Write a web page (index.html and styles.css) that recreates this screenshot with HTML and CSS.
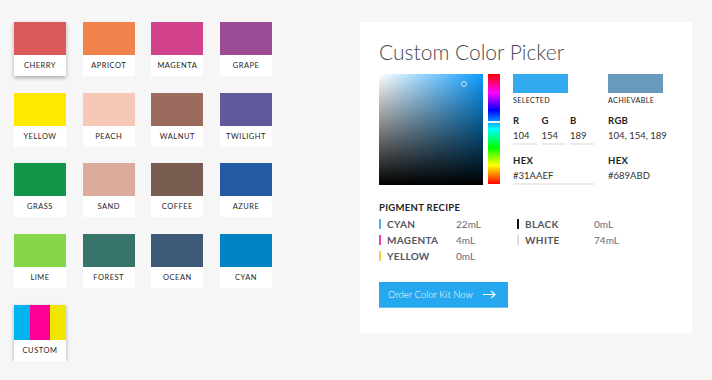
FILE: index.html
```html
<!DOCTYPE html>
<html>
<head>
  <meta charset="UTF-8">
  <title>Custom Color Picker</title>
  <link rel="stylesheet" href="styles.css">
</head>
<body>
  <div class="page">
    <div class="swatches">
      <div class="swatch is-active"><div class="chip cherry"></div><div class="name">Cherry</div></div>
      <div class="swatch"><div class="chip apricot"></div><div class="name">Apricot</div></div>
      <div class="swatch"><div class="chip magenta"></div><div class="name">Magenta</div></div>
      <div class="swatch"><div class="chip grape"></div><div class="name">Grape</div></div>

      <div class="swatch"><div class="chip yellow"></div><div class="name">Yellow</div></div>
      <div class="swatch"><div class="chip peach"></div><div class="name">Peach</div></div>
      <div class="swatch"><div class="chip walnut"></div><div class="name">Walnut</div></div>
      <div class="swatch"><div class="chip twilight"></div><div class="name">Twilight</div></div>

      <div class="swatch"><div class="chip grass"></div><div class="name">Grass</div></div>
      <div class="swatch"><div class="chip sand"></div><div class="name">Sand</div></div>
      <div class="swatch"><div class="chip coffee"></div><div class="name">Coffee</div></div>
      <div class="swatch"><div class="chip azure"></div><div class="name">Azure</div></div>

      <div class="swatch"><div class="chip lime"></div><div class="name">Lime</div></div>
      <div class="swatch"><div class="chip forest"></div><div class="name">Forest</div></div>
      <div class="swatch"><div class="chip ocean"></div><div class="name">Ocean</div></div>
      <div class="swatch"><div class="chip cyan"></div><div class="name">Cyan</div></div>

      <div class="swatch custom is-active">
        <div class="chip cmy"><span class="c"></span><span class="m"></span><span class="y"></span></div>
        <div class="name">Custom</div>
      </div>
    </div>

    <div class="panel">
      <h2 class="title">Custom Color Picker</h2>

      <div class="picker">
        <div class="field"><span class="dot"></span></div>
        <div class="hue"><span class="hue-mark"></span></div>

        <div class="info">
          <div class="col">
            <div class="sample selected"></div>
            <div class="tag">Selected</div>
            <div class="rgb-row">
              <div class="inp short"><div class="lbl">R</div><div class="val">104</div></div>
              <div class="inp short"><div class="lbl">G</div><div class="val">154</div></div>
              <div class="inp short"><div class="lbl">B</div><div class="val">189</div></div>
            </div>
            <div class="inp"><div class="lbl">HEX</div><div class="val">#31AAEF</div></div>
          </div>

          <div class="col">
            <div class="sample achievable"></div>
            <div class="tag">Achievable</div>
            <div class="inp plain"><div class="lbl">RGB</div><div class="val">104, 154, 189</div></div>
            <div class="inp plain"><div class="lbl">HEX</div><div class="val">#689ABD</div></div>
          </div>
        </div>
      </div>

      <div class="recipe">
        <h3>Pigment Recipe</h3>
        <div class="recipe-cols">
          <ul>
            <li class="p-cyan"><span class="pn">Cyan</span><span class="pv">22mL</span></li>
            <li class="p-magenta"><span class="pn">Magenta</span><span class="pv">4mL</span></li>
            <li class="p-yellow"><span class="pn">Yellow</span><span class="pv">0mL</span></li>
          </ul>
          <ul>
            <li class="p-black"><span class="pn">Black</span><span class="pv">0mL</span></li>
            <li class="p-white"><span class="pn">White</span><span class="pv">74mL</span></li>
          </ul>
        </div>
      </div>

      <button class="order">
        <span>Order Color Kit Now</span>
        <svg width="13" height="9" viewBox="0 0 13 9" fill="none" stroke="#fff" stroke-width="1.1">
          <path d="M0 4.5H12M8 0.8L12 4.5L8 8.2"/>
        </svg>
      </button>
    </div>
  </div>
</body>
</html>
```

FILE: styles.css
```css
body {
  margin: 0;
  background: #f6f6f6;
  font-family: Lato, "Liberation Sans", sans-serif;
  color: #333;
}
.page {
  display: flex;
  align-items: flex-start;
  padding: 22px 0 0 14px;
}
.swatches {
  display: grid;
  grid-template-columns: repeat(4, 52px);
  column-gap: 16.7px;
  row-gap: 16.7px;
  align-items: start;
}
.swatch {
  background: #fff;
}
.swatch.is-active {
  box-shadow: 0 2px 4px rgba(0, 0, 0, 0.3);
}
.chip {
  height: 33px;
}
.name {
  height: 21px;
  line-height: 21px;
  text-align: center;
  font-size: 7.5px;
  letter-spacing: 0.5px;
  text-transform: uppercase;
  color: #1e1e1e;
}
.cherry { background: #dc5a5a; }
.apricot { background: #f0824c; }
.magenta { background: #d2428c; }
.grape { background: #9a4b94; }
.yellow { background: #ffe900; }
.peach { background: #f5c8b8; }
.walnut { background: #9b6b5e; }
.twilight { background: #5e5a9b; }
.grass { background: #14964a; }
.sand { background: #dcab9b; }
.coffee { background: #775c4f; }
.azure { background: #2459a3; }
.lime { background: #86d64a; }
.forest { background: #37756a; }
.ocean { background: #3d5b78; }
.cyan { background: #0082c3; }
.cmy {
  height: 35px;
  display: flex;
}
.cmy .c { background: #00b4f0; flex: 0.95; }
.cmy .m { background: #ff0096; flex: 1.1; }
.cmy .y { background: #f0e600; flex: 0.95; }

.panel {
  margin-left: 88px;
  width: 332px;
  box-sizing: border-box;
  padding: 17px 19px 25px;
  background: #fff;
}
.title {
  margin: 0;
  font-size: 21px;
  line-height: 25px;
  font-weight: 300;
  color: #4a4a55;
}
.picker {
  display: flex;
  margin-top: 10px;
}
.field {
  position: relative;
  width: 104px;
  height: 111px;
  background:
    linear-gradient(to top, #000, rgba(0, 0, 0, 0)),
    linear-gradient(to right, #fff, #0a9cff);
}
.dot {
  position: absolute;
  left: 82px;
  top: 7px;
  width: 4px;
  height: 4px;
  border: 1px solid #c8e6fa;
  border-radius: 50%;
}
.hue {
  position: relative;
  margin-left: 5px;
  width: 12px;
  height: 110px;
  background: linear-gradient(to bottom, #f00, #f0f 17%, #00f 33%, #0ff 50%, #0f0 67%, #ff0 83%, #f00);
}
.hue-mark {
  position: absolute;
  left: 0;
  right: 0;
  top: 47px;
  height: 2px;
  background: #e6f4fb;
}
.info {
  display: flex;
  gap: 14px;
  margin-left: 13px;
}
.col {
  width: 81px;
}
.col + .col {
  width: 60px;
}
.sample {
  width: 55px;
  height: 19px;
}
.selected { background: #31aaef; }
.achievable { background: #689abd; }
.tag {
  margin-top: 3px;
  font-size: 7.2px;
  line-height: 10px;
  letter-spacing: 0.3px;
  text-transform: uppercase;
  color: #222;
}
.rgb-row {
  display: flex;
  gap: 4.5px;
}
.inp {
  border-bottom: 2px solid #ececec;
}
.inp.short {
  width: 24px;
}
.inp.plain {
  border-bottom-color: transparent;
}
.lbl {
  margin-top: 9px;
  font-size: 9.5px;
  line-height: 12px;
  font-weight: 700;
  letter-spacing: 0.3px;
  color: #222;
}
.col > .inp:last-child .lbl {
  margin-top: 10px;
}
.val {
  margin-top: 3px;
  padding-bottom: 1px;
  font-size: 9.5px;
  line-height: 12px;
  color: #333;
}

.recipe {
  margin-top: 17px;
}
.recipe h3 {
  margin: 0;
  font-size: 9.5px;
  line-height: 12px;
  font-weight: 700;
  letter-spacing: 0.3px;
  text-transform: uppercase;
  color: #222;
}
.recipe-cols {
  display: flex;
  margin-top: 2px;
}
.recipe-cols ul {
  margin: 0;
  padding: 0;
  list-style: none;
  width: 138px;
}
.recipe-cols li {
  position: relative;
  display: flex;
  align-items: center;
  height: 16px;
  padding-left: 8px;
}
.recipe-cols li::before {
  content: "";
  position: absolute;
  left: 0;
  top: 3px;
  width: 2px;
  height: 10px;
  background: var(--pc);
}
.p-cyan { --pc: #47b8f0; }
.p-magenta { --pc: #f03cc8; }
.p-yellow { --pc: #f7cd4a; }
.p-black { --pc: #111; }
.p-white { --pc: #ddd; }
.pn {
  width: 69px;
  font-size: 10px;
  font-weight: 700;
  letter-spacing: 0.3px;
  text-transform: uppercase;
  color: #55555f;
}
.pv {
  font-size: 10px;
  color: #6a6a72;
}

.order {
  display: flex;
  align-items: center;
  justify-content: space-between;
  width: 129px;
  height: 26px;
  margin-top: 18px;
  padding: 0 12px 0 9px;
  border: none;
  border-bottom: 1px solid #6cc4f4;
  background: #25a8f0;
  color: #fff;
  font-family: Lato, "Liberation Sans", sans-serif;
  font-size: 9.5px;
  font-weight: 300;
  cursor: pointer;
}
```
